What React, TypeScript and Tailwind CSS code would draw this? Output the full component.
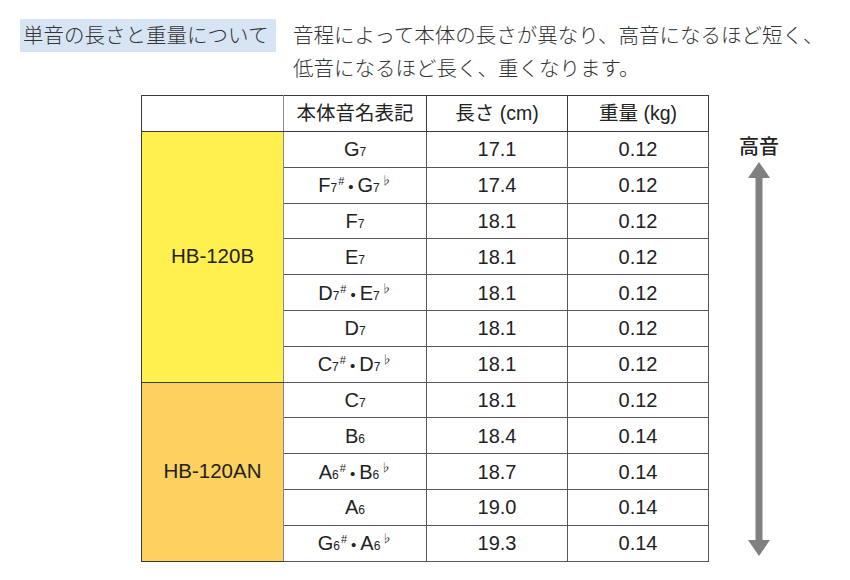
const rows: { note: [string, string, string?][]; len: string; kg: string }[] = [
  { note: [["G", "7"]], len: "17.1", kg: "0.12" },
  { note: [["F", "7", "#"], ["G", "7", "♭"]], len: "17.4", kg: "0.12" },
  { note: [["F", "7"]], len: "18.1", kg: "0.12" },
  { note: [["E", "7"]], len: "18.1", kg: "0.12" },
  { note: [["D", "7", "#"], ["E", "7", "♭"]], len: "18.1", kg: "0.12" },
  { note: [["D", "7"]], len: "18.1", kg: "0.12" },
  { note: [["C", "7", "#"], ["D", "7", "♭"]], len: "18.1", kg: "0.12" },
  { note: [["C", "7"]], len: "18.1", kg: "0.12" },
  { note: [["B", "6"]], len: "18.4", kg: "0.14" },
  { note: [["A", "6", "#"], ["B", "6", "♭"]], len: "18.7", kg: "0.14" },
  { note: [["A", "6"]], len: "19.0", kg: "0.14" },
  { note: [["G", "6", "#"], ["A", "6", "♭"]], len: "19.3", kg: "0.14" },
];

const jp = { fontFamily: '"Liberation Sans", "Noto Sans CJK JP", sans-serif' };

function Note({ parts }: { parts: [string, string, string?][] }) {
  return (
    <span className="inline-flex items-baseline">
      {parts.map(([l, o, acc], i) => (
        <span key={i} className="inline-flex items-baseline">
          {i > 0 && <span className="mx-[4px] text-[15px]">•</span>}
          <span>{l}</span>
          <span className="text-[12px]">{o}</span>
          {acc && (
            <span className="relative -top-[7px] ml-[1px] text-[11px]">{acc}</span>
          )}
        </span>
      ))}
    </span>
  );
}

export default function App() {
  return (
    <div className="h-[580px] w-[850px] bg-white text-[#222]" style={jp}>
      <div className="flex pt-[19px]">
        <div className="ml-[20px] h-[33px] w-[256px] bg-[#d6e4f3] pl-[3px] text-[20.5px] leading-[33px] font-light text-[#333]">
          単音の長さと重量について
        </div>
        <div className="ml-[17px] text-[20.5px] leading-[33px] font-light text-[#333]">
          <div>音程によって本体の長さが異なり、高音になるほど短く、</div>
          <div>低音になるほど長く、重くなります。</div>
        </div>
      </div>

      <div className="mt-[10px] flex">
        <table className="ml-[141px] w-[567px] table-fixed border-collapse border border-[#3a3a3a] text-[20px]">
          <colgroup>
            <col className="w-[142px]" />
            <col className="w-[143px]" />
            <col className="w-[141px]" />
            <col className="w-[141px]" />
          </colgroup>
          <thead>
            <tr className="h-[36px]">
              <th className="border border-[#3a3a3a] border-r-[#8a8a8a]"></th>
              <th className="border border-[#3a3a3a] text-[19.5px] font-normal">本体音名表記</th>
              <th className="border border-[#3a3a3a] text-[19.5px] font-normal">長さ (cm)</th>
              <th className="border border-[#3a3a3a] text-[19.5px] font-normal">重量 (kg)</th>
            </tr>
          </thead>
          <tbody>
            {rows.map((r, i) => (
              <tr key={i} className="h-[35.8px]">
                {i === 0 && (
                  <td
                    rowSpan={7}
                    className="border border-[#3a3a3a] border-r-[#8a8a8a] bg-[#fff04f] text-center text-[20.5px]"
                  >
                    HB-120B
                  </td>
                )}
                {i === 7 && (
                  <td
                    rowSpan={5}
                    className="border border-[#3a3a3a] border-r-[#8a8a8a] bg-[#fdd15f] text-center text-[20.5px]"
                  >
                    HB-120AN
                  </td>
                )}
                <td className="border border-[#555] text-center">
                  <Note parts={r.note} />
                </td>
                <td className="border border-[#555] text-center">{r.len}</td>
                <td className="border border-[#555] text-center">{r.kg}</td>
              </tr>
            ))}
          </tbody>
        </table>

        <div className="flex w-[100px] flex-col items-center pt-[40px]">
          <div className="text-[20px] leading-[24px] font-medium text-[#222]">高音</div>
          <svg width="24" height="394" viewBox="0 0 24 394" className="mt-[3px]">
            <polygon points="12,0 1,16 23,16" fill="#808080" />
            <rect x="8.5" y="15" width="7" height="364" fill="#808080" />
            <polygon points="12,394 1,378 23,378" fill="#808080" />
          </svg>
        </div>
      </div>
    </div>
  );
}
